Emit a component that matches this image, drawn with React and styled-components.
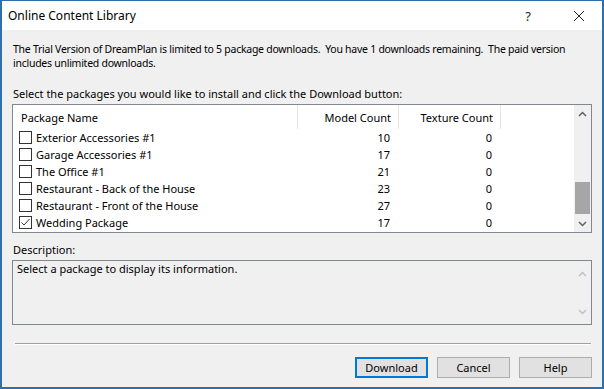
import React from 'react'
import styled, { createGlobalStyle } from 'styled-components'

const Global = createGlobalStyle`
  html, body {
    margin: 0;
    padding: 0;
    background: #f0f0f0;
  }
  * {
    box-sizing: border-box;
  }
`;

const Window = styled.div`
  width: 604px;
  height: 389px;
  display: flex;
  flex-direction: column;
  background: #f0f0f0;
  border: 2px solid #2f6fab;
  border-top: 1px solid #2f6fab;
  font-family: "Noto Sans", "Open Sans", sans-serif;
  font-size: 11px;
  color: #000;
  overflow: hidden;
`;

const TitleBar = styled.div`
  height: 29px;
  flex: none;
  background: #fff;
  display: flex;
  align-items: center;
  padding-left: 6px;
`;

const Title = styled.div`
  flex: 1;
  font-size: 12px;
`;

const TitleButton = styled.div`
  width: ${p => p.$w}px;
  height: 29px;
  display: flex;
  align-items: center;
  justify-content: center;
  font-size: 13px;
  color: #222;
`;

const Body = styled.div`
  flex: 1;
  display: flex;
  flex-direction: column;
  padding: 12px 10px 0 10px;
`;

const Para = styled.p`
  margin: 0;
  line-height: 14px;
  padding-left: 1px;
  font-size: 10.5px;
  letter-spacing: -0.26px;
  white-space: nowrap;
`;

const Label = styled.div`
  margin-top: ${p => p.$top}px;
  line-height: 14px;
  padding-left: 1px;
`;

const ListBox = styled.div`
  margin-top: 3px;
  height: 129px;
  border: 1px solid #828790;
  background: #fff;
  display: flex;
`;

const Table = styled.div`
  flex: 1;
  display: flex;
  flex-direction: column;
`;

const Row = styled.div`
  display: grid;
  grid-template-columns: 285px 101px 102px 1fr;
  height: ${p => (p.$header ? 24 : 17)}px;
  align-items: center;
`;

const HeadCell = styled.div`
  height: 100%;
  display: flex;
  align-items: center;
  justify-content: ${p => (p.$right ? 'flex-end' : 'flex-start')};
  padding: 0 ${p => (p.$right ? 7 : 0)}px 0 ${p => (p.$right ? 0 : 8)}px;
  border-right: ${p => (p.$last ? 'none' : '1px solid #e5e5e5')};
`;

const NameCell = styled.div`
  display: flex;
  align-items: center;
  padding-left: 6px;
  gap: 4px;
`;

const NumCell = styled.div`
  text-align: right;
  padding-right: ${p => p.$pad}px;
`;

const Check = styled.div`
  width: 13px;
  height: 13px;
  border: 1px solid #333;
  background: #fff;
  display: flex;
  align-items: center;
  justify-content: center;
`;

const ScrollBar = styled.div`
  width: 17px;
  background: #f0f0f0;
  display: flex;
  flex-direction: column;
  align-items: center;
`;

const Arrow = styled.div`
  height: 17px;
  width: 17px;
  display: flex;
  align-items: center;
  justify-content: center;
`;

const Track = styled.div`
  flex: 1;
  width: 100%;
  display: flex;
  flex-direction: column;
  justify-content: flex-end;
  padding-bottom: 1px;
`;

const Thumb = styled.div`
  height: 32px;
  margin: 0 1px;
  background: #a6a6a6;
`;

const DescBox = styled.div`
  margin-top: 3px;
  height: 65px;
  border: 1px solid #828790;
  background: #f0f0f0;
  display: flex;
`;

const DescText = styled.div`
  flex: 1;
  padding: 1px 4px;
  line-height: 14px;
`;

const DescScroll = styled.div`
  width: 17px;
  display: flex;
  flex-direction: column;
  justify-content: space-between;
  padding: 4px 0;
`;

const Separator = styled.div`
  margin: 18px 1px 0 3px;
  height: 2px;
  border-top: 1px solid #a0a0a0;
  border-bottom: 1px solid #fff;
`;

const Buttons = styled.div`
  display: flex;
  justify-content: flex-end;
  gap: 9px;
  margin-top: 12px;
`;

const Button = styled.button`
  width: 73px;
  height: 21px;
  font-family: inherit;
  font-size: 11px;
  color: #000;
  background: #e1e1e1;
  border: 1px solid ${p => (p.$primary ? '#0078d7' : '#adadad')};
  box-shadow: ${p => (p.$primary ? 'inset 0 0 0 1px #0078d7' : 'none')};
  padding: 0;
`;

const packages = [
  { name: 'Exterior Accessories #1', model: 10, texture: 0 },
  { name: 'Garage Accessories #1', model: 17, texture: 0 },
  { name: 'The Office #1', model: 21, texture: 0 },
  { name: 'Restaurant - Back of the House', model: 23, texture: 0 },
  { name: 'Restaurant - Front of the House', model: 27, texture: 0 },
  { name: 'Wedding Package', model: 17, texture: 0, checked: true },
];

const Chevron = ({ up, color = '#606060' }) => (
  <svg width="9" height="6" viewBox="0 0 9 6">
    <path
      d={up ? 'M1 5 L4.5 1.5 L8 5' : 'M1 1 L4.5 4.5 L8 1'}
      fill="none"
      stroke={color}
      strokeWidth="1.5"
    />
  </svg>
);

const App = () => {
  return (
    <>
      <Global />
      <Window>
        <TitleBar>
          <Title>Online Content Library</Title>
          <TitleButton $w={56}>?</TitleButton>
          <TitleButton $w={46}>
            <svg width="12" height="12" viewBox="0 0 12 12">
              <path d="M1 1 L11 11 M11 1 L1 11" stroke="#222" strokeWidth="1" />
            </svg>
          </TitleButton>
        </TitleBar>
        <Body>
          <Para>
            The Trial Version of DreamPlan is limited to 5 package downloads.&nbsp; You have 1
            downloads remaining.&nbsp; The paid version
            <br />
            includes unlimited downloads.
          </Para>
          <Label $top={17}>Select the packages you would like to install and click the Download button:</Label>
          <ListBox>
            <Table>
              <Row $header>
                <HeadCell>Package Name</HeadCell>
                <HeadCell $right>Model Count</HeadCell>
                <HeadCell $right>Texture Count</HeadCell>
                <HeadCell $last />
              </Row>
              {packages.map(p => (
                <Row key={p.name}>
                  <NameCell>
                    <Check>
                      {p.checked && (
                        <svg width="11" height="11" viewBox="0 0 11 11">
                          <path d="M1.5 5.5 L4 8 L9.5 2" fill="none" stroke="#333" strokeWidth="1" />
                        </svg>
                      )}
                    </Check>
                    {p.name}
                  </NameCell>
                  <NumCell $pad={9}>{p.model}</NumCell>
                  <NumCell $pad={9}>{p.texture}</NumCell>
                  <div />
                </Row>
              ))}
            </Table>
            <ScrollBar>
              <Arrow><Chevron up /></Arrow>
              <Track><Thumb /></Track>
              <Arrow><Chevron /></Arrow>
            </ScrollBar>
          </ListBox>
          <Label $top={10}>Description:</Label>
          <DescBox>
            <DescText>Select a package to display its information.</DescText>
            <DescScroll>
              <Arrow><Chevron up color="#c0c0c0" /></Arrow>
              <Arrow><Chevron color="#c0c0c0" /></Arrow>
            </DescScroll>
          </DescBox>
          <Separator />
          <Buttons>
            <Button $primary>Download</Button>
            <Button>Cancel</Button>
            <Button>Help</Button>
          </Buttons>
        </Body>
      </Window>
    </>
  );
};

export default App
